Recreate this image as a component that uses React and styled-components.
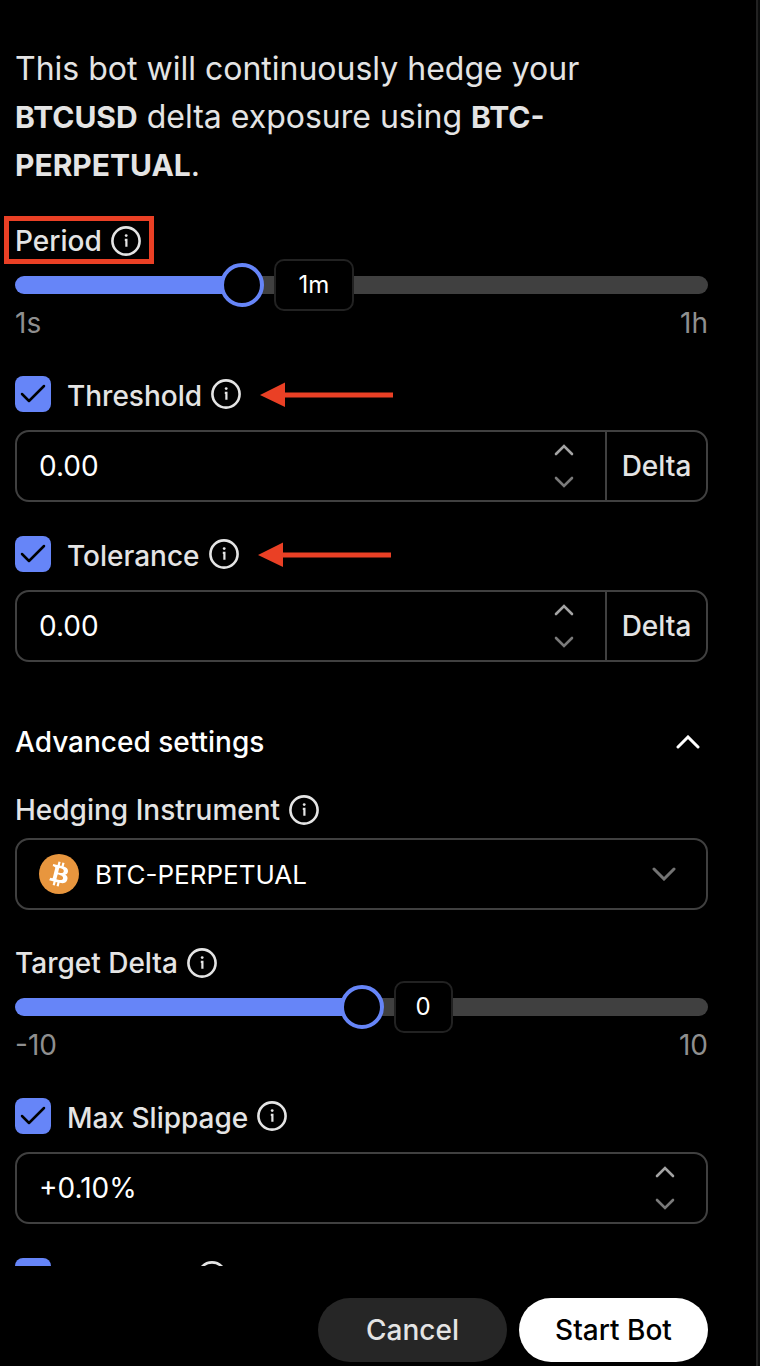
import React, { useState } from 'react';
import styled, { createGlobalStyle } from 'styled-components';

const GlobalStyle = createGlobalStyle`
  * {
    box-sizing: border-box;
  }
  body {
    margin: 0;
    background: #000;
    color: #e4e4e4;
    font-family: Inter, 'Liberation Sans', sans-serif;
    font-size: 28px;
  }
  button, input, select {
    font: inherit;
    color: inherit;
  }
`;

const Page = styled.div`
  height: 100vh;
  padding-right: 2px;
  background: #0b0c0c;
`;

const Panel = styled.form`
  display: flex;
  flex-direction: column;
  height: 100%;
  background: #000;
  border-right: 2px solid #222;
`;

const Content = styled.div`
  flex: 1;
  min-height: 0;
  overflow-y: auto;
  scrollbar-width: none;
  padding: 45px 48px 0 15px;
`;

const Intro = styled.p`
  margin: 0 0 34px;
  font-size: 32px;
  font-weight: 400;
  line-height: 48px;

  strong {
    font-size: 30px;
    font-weight: 700;
  }
`;

const Field = styled.div`
  margin-bottom: ${props => props.$gap || 34}px;
`;

const FieldHead = styled.div`
  display: flex;
  align-items: center;
  gap: 9px;
  height: 36px;
  margin-bottom: ${props => props.$gap || 0}px;
`;

const Label = styled.label`
  display: flex;
  align-items: center;
  gap: 16px;
  font-weight: 500;
  white-space: nowrap;
`;

const CheckText = styled.span`
  padding-top: 4px;
  line-height: 32px;
`;

const Marked = styled.div`
  position: relative;
  display: flex;
  align-items: center;
  gap: 9px;

  &::after {
    content: '';
    position: absolute;
    inset: -8px -13px -6px -11px;
    border: 5px solid #ea4025;
    pointer-events: none;
  }
`;

const Arrow = styled.svg`
  margin-left: 9px;
`;

const InfoButton = styled.button`
  display: flex;
  padding: 0;
  border: 0;
  background: none;
`;

const Check = styled.span`
  display: grid;
  width: 36px;
  height: 36px;

  input {
    grid-area: 1 / 1;
    appearance: none;
    margin: 0;
    border-radius: 8px;
    border: 2px solid #404040;
  }
  input:checked {
    border: 0;
    background: #6685f8;
  }
  svg {
    grid-area: 1 / 1;
    z-index: 1;
    pointer-events: none;
  }
`;

const SliderBox = styled.div`
  position: relative;
  display: flex;
  align-items: center;
  height: 52px;
`;

const Range = styled.input`
  appearance: none;
  width: 100%;
  height: 18px;
  margin: 0;
  border-radius: 9px;
  background: linear-gradient(#6685f8, #6685f8) no-repeat #404040;

  &::-webkit-slider-thumb {
    appearance: none;
    width: 44px;
    height: 44px;
    border: 4px solid #6685f8;
    border-radius: 50%;
    background: #000;
  }
`;

const Bubble = styled.output`
  position: absolute;
  top: 0;
  min-width: ${props => props.$minWidth || 0}px;
  height: 52px;
  padding: 0 20px;
  border: 2px solid #222;
  border-radius: 10px;
  background: #000;
  color: #fff;
  font-size: 24px;
  line-height: 48px;
  text-align: center;
`;

const Ends = styled.div`
  display: flex;
  justify-content: space-between;
  color: #8f8f8f;
  line-height: 24px;
`;

const InputBox = styled.div`
  display: flex;
  align-items: center;
  height: 72px;
  border: 2px solid #404040;
  border-radius: 14px;
`;

const TextInput = styled.input`
  flex: 1;
  min-width: 0;
  height: 100%;
  padding: 0 22px;
  border: 0;
  outline: 0;
  background: none;
  color: #fff;
`;

const Stepper = styled.div`
  display: flex;
  flex-direction: column;
  margin-right: 26px;
`;

const StepButton = styled.button`
  display: flex;
  align-items: center;
  justify-content: center;
  width: 30px;
  height: 32px;
  padding: 0;
  border: 0;
  background: none;
  color: ${props => props.$color};
`;

const Unit = styled.span`
  width: 101px;
  border-left: 2px solid #404040;
  font-weight: 500;
  line-height: 68px;
  text-align: center;
`;

const SelectBox = styled(InputBox)`
  padding: 0 30px 0 22px;
  color: #fff;
`;

const Select = styled.select`
  appearance: none;
  flex: 1;
  height: 100%;
  padding: 0 16px;
  border: 0;
  outline: 0;
  background: #000;
  font-size: 26px;
`;

const SectionToggle = styled.button`
  display: flex;
  align-items: center;
  justify-content: space-between;
  width: 100%;
  height: 36px;
  margin: 62px 0 32px;
  padding: 0 8px 0 0;
  border: 0;
  background: none;
  color: #fff;
  font-weight: 500;
`;

const Footer = styled.div`
  display: flex;
  justify-content: flex-end;
  gap: 12px;
  padding: 32px 48px 4px 15px;
`;

const PillButton = styled.button`
  width: 189px;
  height: 64px;
  padding: 0;
  border: 0;
  border-radius: 32px;
  background: ${props => (props.$primary ? '#fff' : '#262626')};
  color: ${props => (props.$primary ? '#000' : '#e4e4e4')};
  font-weight: 500;
`;

const Chevron = ({ down, width = 16, stroke = 2.6, color = 'currentColor' }) => (
  <svg width={width + 4} height={width / 2 + 4} fill="none" stroke={color} strokeWidth={stroke} strokeLinecap="round">
    <path d={down
      ? `M2 2 l${width / 2} ${width / 2} l${width / 2} -${width / 2}`
      : `M2 ${width / 2 + 2} l${width / 2} -${width / 2} l${width / 2} ${width / 2}`} />
  </svg>
);

const Info = ({ about }) => (
  <InfoButton type="button" aria-label={`About ${about}`}>
    <svg width="30" height="30" fill="none" stroke="#e4e4e4">
      <circle cx="15" cy="15" r="13.6" strokeWidth="2.6" />
      <path d="M13.8 13.8h1.6v7" strokeWidth="2.2" />
      <circle cx="15.2" cy="9.6" r="1.4" fill="#e4e4e4" stroke="none" />
    </svg>
  </InfoButton>
);

const RedArrow = () => (
  <Arrow width="134" height="26" fill="#ea4025" aria-hidden="true">
    <path d="M1 14 L26 1.5 V11.5 H134 V16.5 H26 V26 Z" />
  </Arrow>
);

const BitcoinIcon = () => (
  <svg width="40" height="40" viewBox="0 0 32 32" aria-hidden="true">
    <circle cx="16" cy="16" r="16" fill="#e8963e" />
    <path fill="#fff" d="M23.189 14.02c.314-2.096-1.283-3.223-3.465-3.975l.708-2.84-1.728-.43-.69 2.765c-.454-.114-.92-.22-1.385-.326l.695-2.783L15.596 6l-.708 2.839c-.376-.086-.746-.17-1.104-.26l.002-.009-2.384-.595-.46 1.846s1.283.294 1.256.312c.7.175.826.638.805 1.006l-.806 3.235c.048.012.11.03.18.057l-.183-.045-1.13 4.532c-.086.212-.303.531-.793.41.018.025-1.256-.313-1.256-.313l-.858 1.978 2.25.561c.418.105.828.215 1.231.318l-.715 2.872 1.727.43.708-2.84c.472.127.93.245 1.378.357l-.706 2.828 1.728.43.715-2.866c2.948.558 5.164.333 6.097-2.333.752-2.146-.037-3.385-1.588-4.192 1.13-.26 1.98-1.003 2.207-2.538zm-3.95 5.538c-.533 2.147-4.148.986-5.32.695l.95-3.805c1.172.293 4.929.872 4.37 3.11zm.535-5.569c-.487 1.953-3.495.96-4.47.717l.86-3.45c.975.243 4.118.696 3.61 2.733z" />
  </svg>
);

const PERIODS = [
  '1s', '5s', '10s', '15s', '30s', '45s', '1m', '2m', '3m', '4m',
  '5m', '10m', '15m', '20m', '25m', '30m', '40m', '45m', '50m', '1h',
];

const Slider = ({ id, min, max, value, onChange, format, ends, bubbleWidth }) => {
  const ratio = (value - min) / (max - min);
  // centre of the 44px thumb, measured along the track
  const centre = `${ratio * 100}% + ${22 - ratio * 44}px`;
  return (
    <>
      <SliderBox>
        <Range
          id={id}
          type="range"
          min={min}
          max={max}
          value={value}
          onChange={e => onChange(Number(e.target.value))}
          style={{ backgroundSize: `calc(${centre}) 100%` }}
        />
        <Bubble htmlFor={id} $minWidth={bubbleWidth} style={{ left: `calc(${centre} + 32px)` }}>
          {format(value)}
        </Bubble>
      </SliderBox>
      <Ends>
        <span>{ends[0]}</span>
        <span>{ends[1]}</span>
      </Ends>
    </>
  );
};

const CheckHead = ({ id, text, arrow }) => {
  const [checked, setChecked] = useState(true);
  return (
    <FieldHead $gap={18}>
      <Label htmlFor={id}>
        <Check>
          <input id={id} type="checkbox" checked={checked} onChange={() => setChecked(!checked)} />
          <svg width="36" height="36" fill="none" stroke="#000" strokeWidth="2.5" strokeLinecap="round" strokeLinejoin="round">
            <path d="M7 18 L14 25 L29 10" />
          </svg>
        </Check>
        <CheckText>{text}</CheckText>
      </Label>
      <Info about={text} />
      {arrow && <RedArrow />}
    </FieldHead>
  );
};

const NumberBox = ({ label, initial, step, format, unit }) => {
  const [text, setText] = useState(initial);
  const bump = amount => setText(format((parseFloat(text) || 0) + amount));
  return (
    <InputBox>
      <TextInput aria-label={label} value={text} onChange={e => setText(e.target.value)} />
      <Stepper>
        <StepButton type="button" aria-label={`Increase ${label}`} $color="#a3a3a3" onClick={() => bump(step)}>
          <Chevron />
        </StepButton>
        <StepButton type="button" aria-label={`Decrease ${label}`} $color="#7a7a7a" onClick={() => bump(-step)}>
          <Chevron down />
        </StepButton>
      </Stepper>
      {unit && <Unit>{unit}</Unit>}
    </InputBox>
  );
};

const plain = n => n.toFixed(2);
const percent = n => `${n < 0 ? '' : '+'}${n.toFixed(2)}%`;

const App = () => {
  const [period, setPeriod] = useState(6);
  const [target, setTarget] = useState(0);
  const [open, setOpen] = useState(true);

  return (
    <Page>
      <GlobalStyle />
      <Panel onSubmit={e => e.preventDefault()}>
        <Content>
          <Intro>
            This bot will continuously hedge your <strong>BTCUSD</strong> delta exposure using <strong>BTC-PERPETUAL</strong>.
          </Intro>

          <Field $gap={41}>
            <FieldHead>
              <Marked>
                <Label htmlFor="period">Period</Label>
                <Info about="Period" />
              </Marked>
            </FieldHead>
            <Slider
              id="period"
              min={0}
              max={19}
              value={period}
              onChange={setPeriod}
              format={v => PERIODS[v]}
              ends={['1s', '1h']}
              bubbleWidth={80}
            />
          </Field>

          <Field>
            <CheckHead id="threshold" text="Threshold" arrow />
            <NumberBox label="Threshold amount" initial="0.00" step={0.01} format={plain} unit="Delta" />
          </Field>

          <Field>
            <CheckHead id="tolerance" text="Tolerance" arrow />
            <NumberBox label="Tolerance amount" initial="0.00" step={0.01} format={plain} unit="Delta" />
          </Field>

          <SectionToggle type="button" aria-expanded={open} onClick={() => setOpen(!open)}>
            Advanced settings
            <Chevron width={20} stroke={3} down={!open} />
          </SectionToggle>

          {open && (
            <>
              <Field $gap={35}>
                <FieldHead $gap={10}>
                  <Label htmlFor="instrument">Hedging Instrument</Label>
                  <Info about="Hedging Instrument" />
                </FieldHead>
                <SelectBox>
                  <BitcoinIcon />
                  <Select id="instrument" defaultValue="BTC-PERPETUAL">
                    <option>BTC-PERPETUAL</option>
                  </Select>
                  <Chevron width={20} stroke={3} color="#737373" down />
                </SelectBox>
              </Field>

              <Field $gap={41}>
                <FieldHead>
                  <Label htmlFor="target">Target Delta</Label>
                  <Info about="Target Delta" />
                </FieldHead>
                <Slider
                  id="target"
                  min={-10}
                  max={10}
                  value={target}
                  onChange={setTarget}
                  format={v => v}
                  ends={['-10', '10']}
                />
              </Field>

              <Field>
                <CheckHead id="slippage" text="Max Slippage" />
                <NumberBox label="Max Slippage percent" initial="+0.10%" step={0.01} format={percent} />
              </Field>

              <Field>
                <CheckHead id="max-size" text="Max Size" />
              </Field>
            </>
          )}
        </Content>

        <Footer>
          <PillButton type="button">Cancel</PillButton>
          <PillButton type="submit" $primary>Start Bot</PillButton>
        </Footer>
      </Panel>
    </Page>
  );
};

export default App;
